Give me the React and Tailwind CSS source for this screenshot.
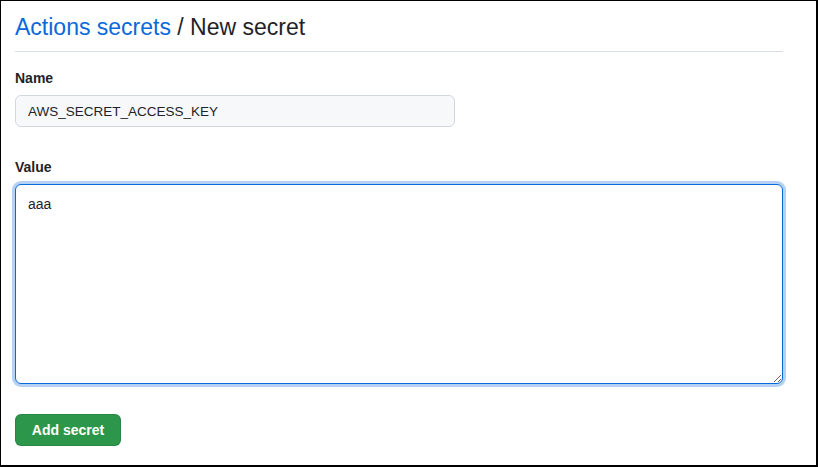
export default function App() {
  return (
    <div className="w-[818px] h-[467px] bg-white border-t border-l border-r-2 border-b-2 border-black pl-[14px] pr-[33px] font-['Liberation_Sans',Arial,sans-serif] text-[#1f2328]">
      <h1 className="pt-[8px] pb-[6px] border-b border-[#d8dee4] text-[23px] leading-[36px] font-normal">
        <a href="#" className="text-[#0969da]">
          Actions secrets
        </a>{" "}
        / New secret
      </h1>

      <form className="flex flex-col">
        <label className="mt-[16px] text-[14px] leading-[21px] font-bold">Name</label>
        <input
          type="text"
          readOnly
          value="AWS_SECRET_ACCESS_KEY"
          className="mt-[6px] w-[440px] h-[32px] rounded-[6px] border border-[#d0d7de] bg-[#f6f8fa] px-[12px] text-[13.5px] text-[#1f2328] outline-none"
        />

        <label className="mt-[30px] text-[14px] leading-[21px] font-bold">Value</label>
        <textarea
          readOnly
          value="aaa"
          className="mt-[6px] w-[768px] h-[200px] rounded-[6px] border border-[#0969da] bg-white px-[12px] pt-[9px] pb-[12px] text-[14px] leading-[21px] text-[#1f2328] outline-none shadow-[0_0_0_3px_rgba(9,105,218,0.3)]"
        />

        <div className="mt-[30px]">
          <button
            type="button"
            className="h-[32px] w-[106px] rounded-[6px] border border-[rgba(31,35,40,0.15)] bg-[#2c974b] text-[14px] font-bold text-white"
          >
            Add secret
          </button>
        </div>
      </form>
    </div>
  );
}
